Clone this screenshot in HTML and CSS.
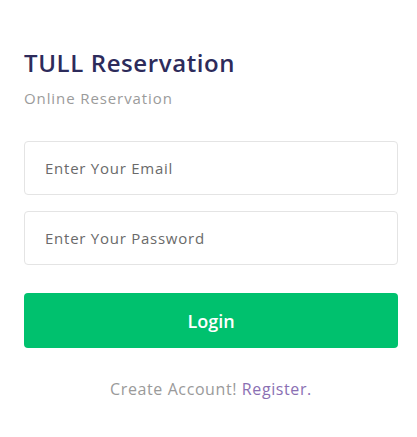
FILE: index.html
```html
<!DOCTYPE html>
<html lang="en">
<head>
<meta charset="utf-8">
<title>TULL Reservation</title>
<link rel="stylesheet" href="styles.css">
</head>
<body>
<main class="login">
  <header class="login-head">
    <h1 class="title">TULL Reservation</h1>
    <p class="subtitle">Online Reservation</p>
  </header>
  <form class="form">
    <input class="field" type="email" placeholder="Enter Your Email">
    <input class="field" type="password" placeholder="Enter Your Password">
    <button class="btn" type="button">Login</button>
  </form>
  <p class="foot">Create Account! <a class="link" href="#">Register.</a></p>
</main>
</body>
</html>
```
FILE: styles.css
```css
html, body {
  margin: 0;
  padding: 0;
  background: #ffffff;
}
body {
  font-family: "Open Sans", "Noto Sans", sans-serif;
}
.login {
  width: 374px;
  padding: 45px 0 0 24px;
}
.login-head {
  display: flex;
  flex-direction: column;
  gap: 6px;
}
.title {
  margin: 0;
  font-size: 24px;
  line-height: 36px;
  font-weight: 600;
  letter-spacing: 0.6px;
  color: #2d2b5b;
}
.subtitle {
  margin: 0;
  font-size: 15px;
  line-height: 22px;
  letter-spacing: 0.9px;
  color: #9b9b9b;
}
.form {
  margin-top: 32px;
  display: flex;
  flex-direction: column;
  gap: 16px;
}
.field {
  box-sizing: border-box;
  height: 54px;
  width: 100%;
  border: 1px solid #e4e4e4;
  border-radius: 4px;
  padding: 0 20px;
  font-family: inherit;
  font-size: 15px;
  letter-spacing: 0.75px;
  color: #555;
  outline: none;
}
.field::placeholder {
  color: #6a6a6a;
}
.btn {
  margin-top: 12px;
  height: 55px;
  border: none;
  border-radius: 4px;
  background: #00c16e;
  color: #fff;
  font-family: inherit;
  font-size: 18px;
  font-weight: 600;
}
.foot {
  margin: 30px 0 0;
  text-align: center;
  font-size: 16px;
  line-height: 22px;
  letter-spacing: 0.6px;
  color: #9a9a9a;
}
.link {
  color: #8a6fb3;
  text-decoration: none;
}
```
